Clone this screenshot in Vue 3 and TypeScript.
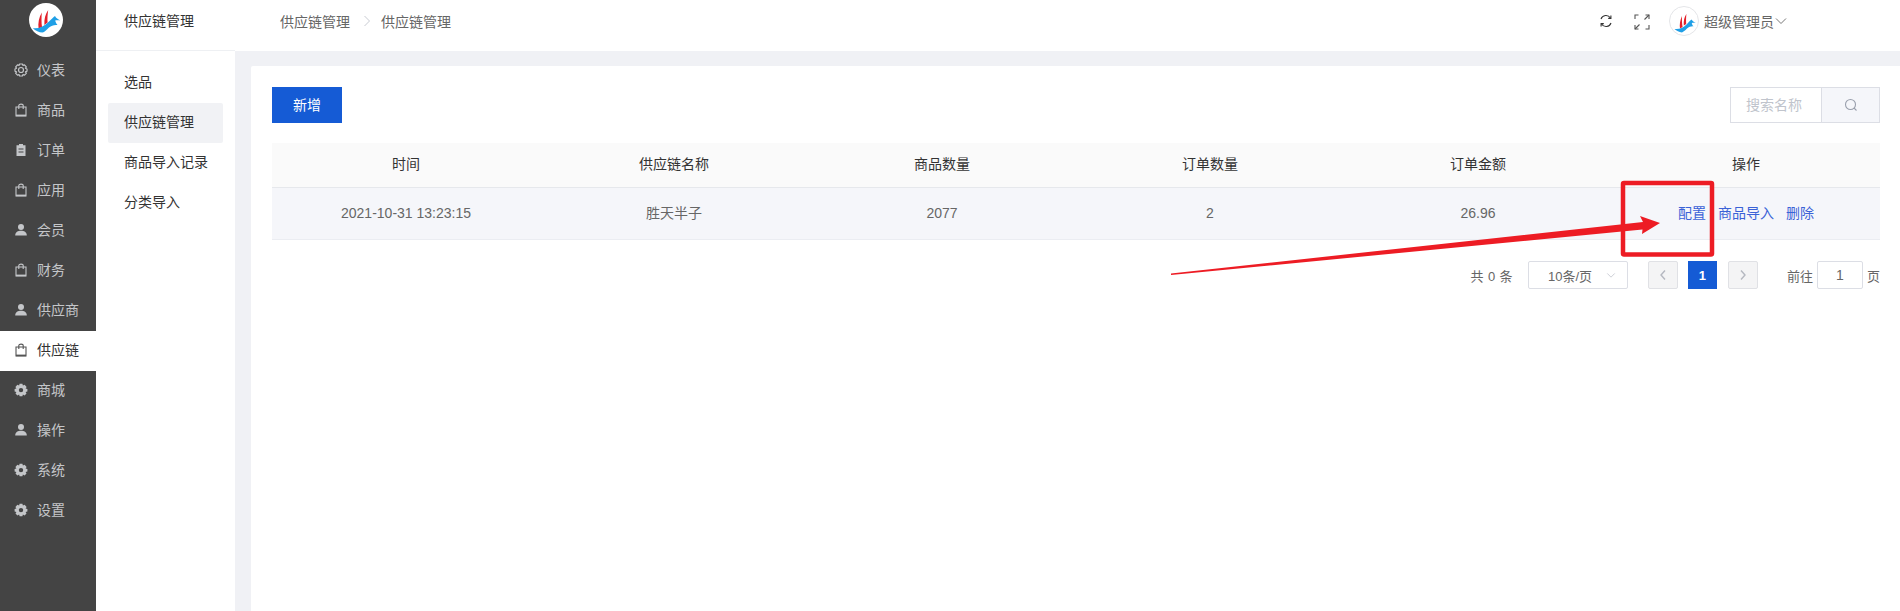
<script setup lang="ts">
type Icon = 'ring' | 'bag' | 'clip' | 'user' | 'gear'
const menu: { label: string; icon: Icon; active?: boolean }[] = [
  { label: '仪表', icon: 'ring' },
  { label: '商品', icon: 'bag' },
  { label: '订单', icon: 'clip' },
  { label: '应用', icon: 'bag' },
  { label: '会员', icon: 'user' },
  { label: '财务', icon: 'bag' },
  { label: '供应商', icon: 'user' },
  { label: '供应链', icon: 'bag', active: true },
  { label: '商城', icon: 'gear' },
  { label: '操作', icon: 'user' },
  { label: '系统', icon: 'gear' },
  { label: '设置', icon: 'gear' },
]
const sub = [
  { label: '选品' },
  { label: '供应链管理', active: true },
  { label: '商品导入记录' },
  { label: '分类导入' },
]
const columns = ['时间', '供应链名称', '商品数量', '订单数量', '订单金额', '操作']
const row = ['2021-10-31 13:23:15', '胜天半子', '2077', '2', '26.96']
</script>

<template>
  <div class="page">
    <aside class="rail">
      <div class="rail-logo">
        <svg class="logo" viewBox="0 0 34 34">
          <circle cx="17" cy="17" r="17" fill="#fff" />
          <path d="M12.8 9.5 C10 14 8.8 20 9.6 26 L13 24 C12.4 20 12.4 14 12.8 9.5 Z" fill="#e3202a" />
          <path d="M19.2 7 C16.4 11 15 16 15.4 22 L18.6 19.6 C18.2 16 18.6 11 19.2 7 Z" fill="#e3202a" />
          <path d="M3.8 25.2 C10 26 15 23.5 20 18.5 C22 16.5 24.5 14 26 13 C27 15 29 16.5 31.2 17.4 C29 17.4 27.5 17.2 26.2 17.6 C26.6 19.5 27.4 21 28.5 22 C25 21.6 22.5 22.5 20 24.5 C17.5 27 15.5 29 13.5 29.6 C10 29.2 6.5 27.6 3.8 25.2 Z" fill="#1f9fe6" />
        </svg>
      </div>
      <nav class="rail-nav">
        <a v-for="m in menu" :key="m.label" class="rail-item" :class="{ active: m.active }">
          <svg class="rail-icon" viewBox="0 0 14 14">
            <g v-if="m.icon === 'ring'" fill="none" stroke="currentColor" stroke-width="1.2">
              <path stroke-linejoin="round" d="M5.6 1 H8.4 L8.9 2.4 L10.5 1.9 L12.3 3.9 L11.5 5.3 L13 6 V8.2 L11.5 8.9 L12.3 10.3 L10.5 12.1 L8.9 11.6 L8.4 13 H5.6 L5.1 11.6 L3.5 12.1 L1.7 10.3 L2.5 8.9 L1 8.2 V6 L2.5 5.3 L1.7 3.9 L3.5 1.9 L5.1 2.4 Z" />
              <circle cx="7" cy="7" r="2.5" />
            </g>
            <g v-else-if="m.icon === 'bag'" fill="none" stroke="currentColor">
              <path stroke-width="1.1" d="M2 4 H12 V13 H2 Z" />
              <path stroke-width="1.1" d="M4.8 6 V2.6 C4.8 0.6 9.2 0.6 9.2 2.6 V6" />
              <path stroke-width="1.6" d="M2 12.4 H12" />
            </g>
            <g v-else-if="m.icon === 'clip'" fill="currentColor">
              <path fill-rule="evenodd" d="M2.5 2.2 H5 V1 H9 V2.2 H11.5 V13 H2.5 Z M4.5 5.5 V6.5 H9.5 V5.5 Z M4.5 8.5 V9.5 H9.5 V8.5 Z" />
            </g>
            <g v-else-if="m.icon === 'user'" fill="currentColor">
              <circle cx="7" cy="4" r="3" />
              <path d="M1.2 12.5 C1.2 9 4 7.8 7 7.8 C10 7.8 12.8 9 12.8 12.5 Z" />
            </g>
            <g v-else fill="currentColor">
              <path fill-rule="evenodd" d="M5.6 0.8 H8.4 L8.9 2.5 L10.6 1.7 L12.6 3.9 L11.6 5.4 L13.4 6 V8.4 L11.6 9 L12.5 10.6 L10.6 12.5 L8.9 11.6 L8.4 13.2 H5.6 L5.1 11.6 L3.4 12.5 L1.5 10.6 L2.4 9 L0.6 8.4 V6 L2.4 5.4 L1.4 3.9 L3.4 1.7 L5.1 2.5 Z M7 4.9 A2.2 2.2 0 1 0 7 9.3 A2.2 2.2 0 1 0 7 4.9 Z" />
            </g>
          </svg>
          <span>{{ m.label }}</span>
        </a>
      </nav>
    </aside>

    <aside class="subnav">
      <div class="subnav-title">供应链管理</div>
      <nav class="subnav-list">
        <a v-for="s in sub" :key="s.label" class="subnav-item" :class="{ active: s.active }">{{ s.label }}</a>
      </nav>
    </aside>

    <div class="content">
      <header class="topbar">
        <div class="crumbs">
          <span>供应链管理</span>
          <svg class="crumb-sep" viewBox="0 0 8 12"><path d="M1.5 1 L6.5 6 L1.5 11" fill="none" stroke="#c9ccd3" stroke-width="1" /></svg>
          <span>供应链管理</span>
        </div>
        <div class="top-actions">
          <svg class="top-icon" viewBox="0 0 14 14" fill="none" stroke="#333" stroke-width="1.1">
            <path d="M2 5 A5.2 5.2 0 0 1 11.4 4" />
            <path d="M12 9 A5.2 5.2 0 0 1 2.6 10" />
            <path d="M11.9 1.6 V4.4 H9.2" />
            <path d="M2.1 12.4 V9.6 H4.8" />
          </svg>
          <svg class="top-icon full" viewBox="0 0 16 16" fill="none" stroke="#555" stroke-width="1.1">
            <path d="M1 5 V1 H4.5 M11.5 1 H15 V5 M15 11 V15 H11.5 M4.5 15 H1 V11" />
            <path d="M10.5 5.5 L15 1 M1 15 L5.5 10.5" />
          </svg>
          <div class="user">
            <svg class="avatar" viewBox="0 0 30 30">
              <circle cx="15" cy="15" r="14.5" fill="#fff" stroke="#e4e5e8" />
              <path d="M13 10 C11 14 10.4 19 11 22.6 L13.6 21 C13 18 12.8 14 13 10 Z" fill="#e3202a" />
              <path d="M17.4 8 C15.2 11 14.4 15 14.8 19.6 L17.2 18 C17 15 17 11 17.4 8 Z" fill="#e3202a" />
              <path d="M5.5 23 C10 23.6 14 22 17.5 18.5 C19 17 21 14.5 22.5 13.5 C23.4 15 25 16.2 26.8 16.8 C25 16.8 23.6 16.8 22.8 17 C23 18.4 23.6 19.6 24.6 20.2 C22 20 20 20.8 18 22.6 C16 24.6 14.4 26 13 26.4 C10 26 7.6 24.8 5.5 23 Z" fill="#1f9fe6" />
            </svg>
            <span class="user-name">超级管理员</span>
            <svg class="user-caret" viewBox="0 0 12 8"><path d="M1 1.5 L6 6.5 L11 1.5" fill="none" stroke="#777" stroke-width="1" /></svg>
          </div>
        </div>
      </header>

      <main class="main">
        <section class="card">
          <div class="toolbar">
            <button class="btn-primary" type="button">新增</button>
            <div class="search">
              <div class="search-input">搜索名称</div>
              <div class="search-btn">
                <svg viewBox="0 0 14 14" fill="none" stroke="#9aa0ad" stroke-width="1.1">
                  <circle cx="6.5" cy="6.5" r="5" />
                  <path d="M10 10 L12.5 12.5" />
                </svg>
              </div>
            </div>
          </div>

          <div class="table">
            <div class="tr head">
              <div v-for="c in columns" :key="c" class="cell">{{ c }}</div>
            </div>
            <div class="tr body">
              <div v-for="c in row" :key="c" class="cell">{{ c }}</div>
              <div class="cell ops">
                <a>配置</a>
                <a>商品导入</a>
                <a>删除</a>
              </div>
            </div>
          </div>

          <div class="pager">
            <span class="total">共 0 条</span>
            <div class="size">
              <span>10条/页</span>
              <svg viewBox="0 0 12 8"><path d="M1.5 1.5 L6 6 L10.5 1.5" fill="none" stroke="#c3c6cf" stroke-width="1" /></svg>
            </div>
            <button class="page-btn" type="button">
              <svg viewBox="0 0 8 12"><path d="M6 1.5 L2 6 L6 10.5" fill="none" stroke="#b5b8c0" stroke-width="1.4" /></svg>
            </button>
            <button class="page-num" type="button">1</button>
            <button class="page-btn" type="button">
              <svg viewBox="0 0 8 12"><path d="M2 1.5 L6 6 L2 10.5" fill="none" stroke="#b5b8c0" stroke-width="1.4" /></svg>
            </button>
            <span class="goto">前往</span>
            <div class="goto-input">1</div>
            <span class="goto-unit">页</span>
          </div>
        </section>
      </main>
    </div>

    <svg class="annotation" viewBox="0 0 1900 611">
      <rect x="1623" y="183" width="89" height="71.5" rx="1" fill="none" stroke="#ed1c24" stroke-width="4.5" />
      <path d="M1171 273.5 L1643 222 L1640 216 L1660 223 L1642 234 L1642.5 229.5 L1171 275 Z" fill="#ed1c24" />
    </svg>
  </div>
</template>

<style>
html, body { margin: 0; background: #fff; }
</style>

<style scoped>
.page {
  position: relative;
  display: flex;
  width: 1900px;
  height: 611px;
  overflow: hidden;
  font-family: "Liberation Sans", "Noto Sans CJK SC", sans-serif;
  font-size: 14px;
  color: #333;
}
.rail { width: 96px; flex: none; background: #444; }
.rail-logo { height: 51px; display: flex; justify-content: center; padding: 3px 4px 0 0; box-sizing: border-box; }
.logo { width: 34px; height: 34px; }
.rail-item {
  height: 40px;
  display: flex;
  align-items: center;
  gap: 9px;
  padding-left: 14px;
  color: #c4c6c9;
}
.rail-item span { line-height: 38px; height: 40px; }
.rail-item.active { background: #fff; color: #333; }
.rail-icon { width: 14px; height: 14px; flex: none; margin-top: -2px; }
.rail-item.active .rail-icon { color: #555; }

.subnav { width: 139px; flex: none; background: #fff; }
.subnav-title {
  height: 50px;
  line-height: 42px;
  padding-left: 28px;
  color: #333;
  border-bottom: 1px solid #eef0f3;
}
.subnav-list { padding: 12px 12px 0; }
.subnav-item {
  display: block;
  height: 40px;
  line-height: 39px;
  padding-left: 16px;
  border-radius: 2px;
  color: #333;
}
.subnav-item.active { background: #f1f2f5; }

.content { flex: 1; min-width: 0; display: flex; flex-direction: column; }
.topbar {
  height: 51px;
  flex: none;
  display: flex;
  justify-content: space-between;
  background: #fff;
  box-sizing: border-box;
  padding-left: 45px;
  color: #666;
}
.crumbs { display: flex; align-items: center; height: 42px; }
.crumb-sep { width: 8px; height: 12px; margin: 0 10px 0 13px; }
.top-actions { display: flex; align-items: center; height: 42px; padding-right: 113px; }
.top-icon { width: 14px; height: 14px; margin-right: 21px; }
.top-icon.full { width: 16px; height: 16px; margin: 2px 19px 0 0; }
.user { display: flex; align-items: center; }
.avatar { width: 30px; height: 30px; }
.user-name { margin-left: 5px; color: #666; }
.user-caret { width: 12px; height: 8px; margin-left: 1px; }

.main { flex: 1; background: #f0f1f5; padding: 15px 0 0 16px; min-height: 0; }
.card {
  height: 100%;
  box-sizing: border-box;
  background: #fff;
  border-radius: 2px 0 0 0;
  padding: 21px 20px 0 21px;
}
.toolbar { display: flex; justify-content: space-between; height: 36px; }
.btn-primary {
  width: 70px;
  height: 36px;
  border: 0;
  background: #155bd5;
  color: #fff;
  font: inherit;
  padding: 0 0 2px;
}
.search { display: flex; height: 36px; width: 150px; box-sizing: border-box; border: 1px solid #dcdee5; }
.search-input { flex: 1; line-height: 34px; padding-left: 15px; color: #c0c4cc; }
.search-btn {
  width: 57px;
  background: #f5f6fa;
  border-left: 1px solid #dcdee5;
  display: flex;
  align-items: center;
  justify-content: center;
}
.search-btn svg { width: 14px; height: 14px; }

.table { margin-top: 20px; }
.tr { display: grid; grid-template-columns: repeat(6, 1fr); text-align: center; }
.tr.head { height: 45px; box-sizing: border-box; line-height: 43px; background: #fafafa; border-bottom: 1px solid #e6e8ec; color: #333; }
.tr.body { height: 52px; box-sizing: border-box; line-height: 50px; background: #f5f6fa; border-bottom: 1px solid #ebedf2; color: #666; }
.ops { display: flex; justify-content: center; gap: 12px; color: #3a62d7; }

.pager {
  display: flex;
  align-items: center;
  justify-content: flex-end;
  height: 28px;
  margin-top: 21px;
  color: #666;
  font-size: 13px;
}
.total { margin-right: 15px; letter-spacing: 0.4px; }
.size {
  width: 100px;
  height: 28px;
  box-sizing: border-box;
  border: 1px solid #dcdee5;
  border-radius: 2px;
  display: flex;
  align-items: center;
  padding-left: 19px;
  position: relative;
}
.size svg { position: absolute; right: 11px; top: 10px; width: 10px; height: 7px; }
.page-btn {
  width: 30px;
  height: 28px;
  margin-left: 20px;
  border: 1px solid #e0e1e5;
  background: #f4f4f5;
  border-radius: 2px;
  padding: 0;
  display: flex;
  align-items: center;
  justify-content: center;
}
.page-btn svg { width: 8px; height: 12px; }
.page-num {
  width: 29px;
  height: 28px;
  margin-left: 10px;
  border: 0;
  background: #155bd5;
  color: #fff;
  font: inherit;
  font-weight: 700;
  padding: 0;
}
.page-num + .page-btn { margin-left: 11px; }
.goto { margin-left: 29px; }
.goto-input {
  width: 46px;
  height: 28px;
  box-sizing: border-box;
  margin-left: 4px;
  border: 1px solid #dcdee5;
  border-radius: 2px;
  text-align: center;
  line-height: 26px;
  font-size: 14px;
}
.goto-unit { margin-left: 4px; }

.annotation { position: absolute; inset: 0; width: 1900px; height: 611px; pointer-events: none; }
</style>
